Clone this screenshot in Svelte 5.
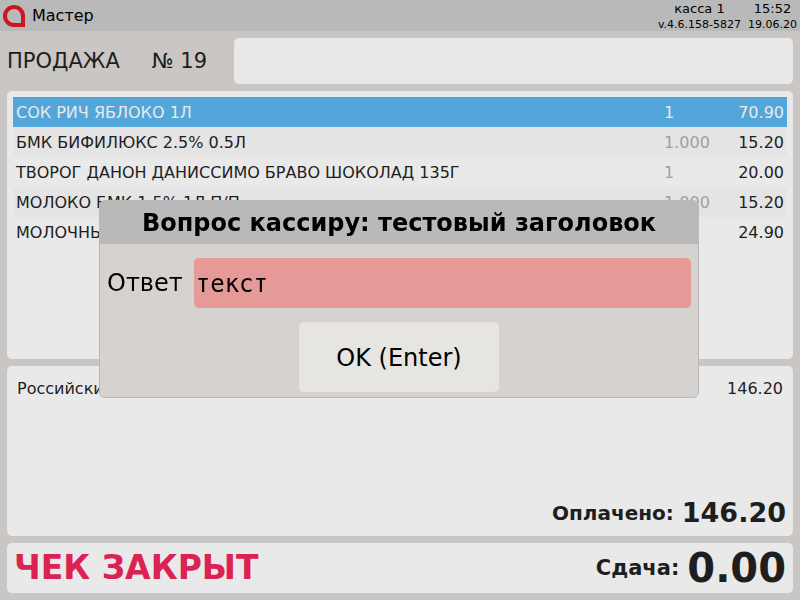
<script lang="ts">
let query = $state('');
let answer = $state('текст');

const items = [
  { name: 'СОК РИЧ ЯБЛОКО 1Л', count: '1', price: '70.90' },
  { name: 'БМК БИФИЛЮКС 2.5% 0.5Л', count: '1.000', price: '15.20' },
  { name: 'ТВОРОГ ДАНОН ДАНИССИМО БРАВО ШОКОЛАД 135Г', count: '1', price: '20.00' },
  { name: 'МОЛОКО БМК 1.5% 1Л П/П', count: '1.000', price: '15.20' },
  { name: 'МОЛОЧНЫЙ', count: '1', price: '24.90' },
];
const selected = 0;
</script>

<div class="pos">
  <header class="topbar">
    <svg class="logo" viewBox="0 0 22 22" aria-hidden="true">
      <path d="M11 2A9 9 0 1 0 11 20H20V11A9 9 0 0 0 11 2Z" fill="none" stroke="#cb161d" stroke-width="4" />
    </svg>
    <span class="user">Мастер</span>
    <div class="info">
      <span>касса 1</span>
      <span class="info-small">v.4.6.158-5827</span>
    </div>
    <div class="info">
      <span>15:52</span>
      <span class="info-small">19.06.20</span>
    </div>
  </header>

  <main class="content">
    <div class="operation">
      <label class="operation-title" for="query">
        <span>ПРОДАЖА</span>
        <span>№ 19</span>
      </label>
      <input id="query" class="query" type="text" autocomplete="off" bind:value={query} />
    </div>

    <section class="panel goods">
      <table>
        <tbody>
          {#each items as item, i}
            <tr class:selected={i === selected}>
              <td class="name">{item.name}</td>
              <td class="count">{item.count}</td>
              <td class="price">{item.price}</td>
            </tr>
          {/each}
        </tbody>
      </table>
    </section>

    <section class="panel payments">
      <div class="payment">
        <span>Российский</span>
        <span>146.20</span>
      </div>
      <div class="paid">
        <span class="sum-label">Оплачено:</span>
        <strong class="paid-sum">146.20</strong>
      </div>
    </section>

    <footer class="panel total">
      <strong class="status">ЧЕК ЗАКРЫТ</strong>
      <span class="change-label">Сдача:</span>
      <strong class="change">0.00</strong>
    </footer>
  </main>
</div>

<div class="overlay">
  <form class="dialog" role="dialog" aria-labelledby="dialog-title" onsubmit={(e) => e.preventDefault()}>
    <h1 id="dialog-title">Вопрос кассиру: тестовый заголовок</h1>
    <div class="dialog-body">
      <div class="field">
        <label for="answer">Ответ</label>
        <input id="answer" type="text" autocomplete="off" bind:value={answer} />
      </div>
      <button type="submit">OK (Enter)</button>
    </div>
  </form>
</div>

<style>
  :global(body) {
    background: #cac6c3;
  }

  .pos,
  .overlay {
    font-family: 'DejaVu Sans', sans-serif;
    font-size: 16px;
    color: #1e1e1e;
  }

  .pos,
  .pos *,
  .overlay,
  .overlay * {
    box-sizing: border-box;
  }

  input,
  button {
    border: 0;
    border-radius: 5px;
    outline: none;
    color: inherit;
  }

  .pos {
    display: flex;
    flex-direction: column;
    min-height: 100vh;
  }

  .topbar {
    display: flex;
    align-items: center;
    gap: 7px;
    padding: 0 3px;
    height: 31px;
    background: #b9b9b9;
    color: #000;
  }

  .logo {
    width: 22px;
    height: 22px;
  }

  .user {
    flex: 1;
  }

  .info {
    display: flex;
    flex-direction: column;
    align-items: center;
    padding-top: 2px;
    font-size: 13px;
    line-height: 16px;
  }

  .info-small {
    font-size: 11px;
    line-height: 15px;
  }

  .content {
    display: flex;
    flex: 1;
    flex-direction: column;
    gap: 7px;
    padding: 7px;
  }

  .operation {
    display: flex;
    align-items: center;
    gap: 27px;
  }

  .operation-title {
    display: flex;
    gap: 32px;
    font-size: 21px;
    line-height: 26px;
    white-space: nowrap;
  }

  .query {
    flex: 1;
    min-width: 0;
    height: 46px;
    padding: 0 8px;
    background: #e9e9e9;
    font: inherit;
  }

  .panel {
    border-radius: 5px;
    background: #e9e9e9;
  }

  .goods {
    flex: 1;
    padding: 6px;
  }

  table {
    width: 100%;
    border-collapse: collapse;
  }

  tr:nth-child(even) {
    background: #e4e4e4;
  }

  td {
    height: 30px;
    padding: 0 3px;
  }

  .count {
    width: 63px;
    color: #a0a0a0;
  }

  .price {
    width: 63px;
    text-align: right;
  }

  .selected {
    background: #53a6d9;
  }

  .selected td {
    color: #e9e9e9;
  }

  .payments {
    display: flex;
    flex-direction: column;
    justify-content: space-between;
    min-height: 170px;
    padding: 7px;
  }

  .payment {
    display: flex;
    justify-content: space-between;
    padding: 0 3px;
    line-height: 32px;
  }

  .paid,
  .total {
    display: flex;
    align-items: center;
    gap: 8px;
  }

  .paid {
    justify-content: flex-end;
    line-height: 32px;
  }

  .sum-label {
    font-size: 20px;
    font-weight: bold;
  }

  .paid-sum {
    font-size: 27px;
  }

  .total {
    min-height: 50px;
    padding: 0 7px;
    line-height: 50px;
  }

  .status {
    flex: 1;
    color: #da2353;
    font-size: 33px;
  }

  .change-label {
    font-size: 21px;
    font-weight: bold;
  }

  .change {
    font-size: 40px;
  }

  .overlay {
    position: fixed;
    inset: 0;
    display: flex;
    align-items: center;
    justify-content: center;
    padding: 0 2px 2px 0;
    color: #000;
    font-size: 24px;
  }

  .dialog {
    width: 600px;
    overflow: hidden;
    border: 1px solid #b9b9b9;
    border-radius: 6px;
    background: #d6d2cf;
  }

  h1 {
    margin: 0;
    padding-top: 1px;
    background: #b9b9b9;
    font-size: 24px;
    line-height: 42px;
    text-align: center;
  }

  .dialog-body {
    display: flex;
    flex-direction: column;
    align-items: center;
    gap: 14px;
    padding: 14px 7px 5px;
  }

  .field {
    display: flex;
    align-items: center;
    align-self: stretch;
    gap: 11px;
  }

  .field label {
    line-height: 50px;
  }

  .field input {
    flex: 1;
    min-width: 0;
    height: 50px;
    padding: 2px 2px 0;
    background: #e69a98;
    font-family: 'DejaVu Sans Mono', monospace;
    font-size: 24px;
  }

  button {
    width: 200px;
    height: 70px;
    padding: 2px 0 0;
    background: #e6e5e1;
    font: inherit;
  }
</style>
